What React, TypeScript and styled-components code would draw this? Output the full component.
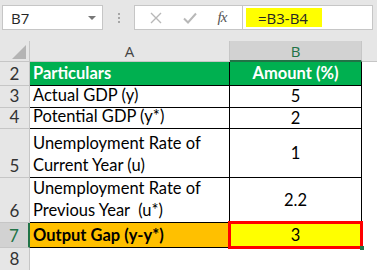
import React from 'react';
import styled, { createGlobalStyle, css } from 'styled-components';

const GlobalStyle = createGlobalStyle`
  html, body {
    margin: 0;
    padding: 0;
    background: #ffffff;
  }
  body {
    width: 377px;
    height: 270px;
    overflow: hidden;
    font-family: Lato, "Liberation Sans", sans-serif;
  }
`;

const colors = {
  chrome: '#e6e6e6',
  chromeBorder: '#c6c6c6',
  headActive: '#d2d2d2',
  excelGreen: '#217346',
  tableGreen: '#00b050',
  orange: '#ffc000',
  yellow: '#ffff00',
  red: '#ff0000',
  grid: '#000000',
};

const TopBar = styled.div`
  display: flex;
  align-items: flex-start;
  height: 41px;
  padding: 5px 0 0 2px;
  box-sizing: border-box;
  background: ${colors.chrome};
`;

const NameBox = styled.div`
  display: flex;
  align-items: center;
  justify-content: space-between;
  width: 101px;
  height: 25px;
  box-sizing: border-box;
  padding: 0 6px 0 8px;
  background: #fff;
  border: 1px solid ${colors.chromeBorder};
  font-family: "Open Sans", "Liberation Sans", sans-serif;
  font-size: 15px;
  color: #262626;
`;

const Caret = styled.span`
  width: 0;
  height: 0;
  border-left: 4px solid transparent;
  border-right: 4px solid transparent;
  border-top: 4px solid #777;
`;

const Dots = styled.div`
  display: flex;
  flex-direction: column;
  gap: 2px;
  width: 31px;
  align-items: center;
  padding-top: 8px;

  span {
    width: 2px;
    height: 2px;
    background: #a6a6a6;
  }
`;

const FxButtons = styled.div`
  display: flex;
  align-items: center;
  justify-content: space-around;
  width: 109px;
  height: 25px;
  box-sizing: border-box;
  padding: 0 6px 0 4px;
  background: #fff;
  border: 1px solid ${colors.chromeBorder};
`;

const FxLabel = styled.span`
  font-family: "Liberation Serif", serif;
  font-style: italic;
  font-size: 15px;
  color: #555;
  letter-spacing: -1px;
`;

const FormulaInput = styled.div`
  display: flex;
  align-items: center;
  width: 130px;
  height: 25px;
  box-sizing: border-box;
  padding: 2px 3px;
  background: #fff;
  border: 1px solid ${colors.chromeBorder};
  border-left: none;
`;

const Highlight = styled.div`
  display: flex;
  align-items: center;
  height: 100%;
  width: 76px;
  padding-left: 12px;
  box-sizing: border-box;
  background: ${colors.yellow};
  font-family: "Open Sans", "Liberation Sans", sans-serif;
  font-size: 15px;
  color: #262626;
`;

const Sheet = styled.div`
  display: grid;
  grid-template-columns: 30px 200px 132px 1fr;
  grid-template-rows: 21px 24px 22px 21px 49px 45px 25px 23px;
`;

const Corner = styled.div`
  position: relative;
  background: ${colors.chrome};
  border-right: 1px solid ${colors.chromeBorder};
  border-bottom: 1px solid ${colors.chromeBorder};
  box-sizing: border-box;

  &::after {
    content: '';
    position: absolute;
    right: 3px;
    bottom: 2px;
    width: 0;
    height: 0;
    border-left: 14px solid transparent;
    border-bottom: 14px solid #b4b4b4;
  }
`;

const ColHead = styled.div<{ $active?: boolean }>`
  display: flex;
  align-items: center;
  justify-content: center;
  box-sizing: border-box;
  font-family: "Open Sans", "Liberation Sans", sans-serif;
  font-size: 15px;
  background: ${colors.chrome};
  color: #444;
  border-right: 1px solid ${colors.chromeBorder};
  border-bottom: 1px solid ${colors.chromeBorder};

  ${(p) =>
    p.$active &&
    css`
      background: ${colors.headActive};
      color: ${colors.excelGreen};
      border-bottom: 2px solid ${colors.excelGreen};
    `}
`;

const ColFiller = styled.div`
  background: ${colors.chrome};
  border-bottom: 1px solid ${colors.chromeBorder};
`;

const RowHead = styled.div<{ $active?: boolean }>`
  display: flex;
  align-items: flex-end;
  justify-content: center;
  padding-bottom: 1px;
  box-sizing: border-box;
  font-family: Lato, "Liberation Sans", sans-serif;
  font-size: 17px;
  color: #333;
  background: ${colors.chrome};
  border-bottom: 1px solid ${colors.chromeBorder};
  border-right: 1px solid ${colors.chromeBorder};

  ${(p) =>
    p.$active &&
    css`
      background: ${colors.headActive};
      color: ${colors.excelGreen};
      border-right: 2px solid ${colors.excelGreen};
    `}
`;

type Tone = 'plain' | 'head' | 'total' | 'result';

const toneStyles: Record<Tone, ReturnType<typeof css>> = {
  plain: css``,
  head: css`
    background: ${colors.tableGreen};
    color: #fff;
    font-weight: 700;
  `,
  total: css`
    background: ${colors.orange};
    font-weight: 700;
  `,
  result: css`
    background: ${colors.yellow};
  `,
};

const Cell = styled.div<{ $tone: Tone; $center?: boolean }>`
  position: relative;
  display: flex;
  flex-direction: column;
  justify-content: ${(p) => (p.$center ? 'center' : 'flex-end')};
  align-items: ${(p) => (p.$center ? 'center' : 'flex-start')};
  padding: 0 3px 1px;
  box-sizing: border-box;
  font-family: Lato, "Liberation Sans", sans-serif;
  font-size: 16.5px;
  line-height: 22px;
  color: #000;
  white-space: nowrap;
  border-right: 1px solid ${colors.grid};
  border-bottom: 1px solid ${colors.grid};
  ${(p) => toneStyles[p.$tone]}
`;

const Selection = styled.div`
  position: absolute;
  left: -2px;
  top: -2px;
  right: -2px;
  bottom: -2px;
  border: 3px solid ${colors.red};
  pointer-events: none;

  &::after {
    content: '';
    position: absolute;
    right: -4px;
    bottom: -4px;
    width: 4px;
    height: 4px;
    background: ${colors.excelGreen};
  }
`;

const Blank = styled.div`
  background: #fff;
`;

interface Row {
  n: number;
  label: React.ReactNode;
  value: string;
  tone?: Tone;
}

const rows: Row[] = [
  { n: 2, label: 'Particulars', value: 'Amount (%)', tone: 'head' },
  { n: 3, label: 'Actual GDP (y)', value: '5' },
  { n: 4, label: 'Potential GDP (y*)', value: '2' },
  { n: 5, label: <>Unemployment Rate of<br />Current Year (u)</>, value: '1' },
  { n: 6, label: <>Unemployment Rate of<br />Previous Year&nbsp;&nbsp;(u*)</>, value: '2.2' },
  { n: 7, label: 'Output Gap (y-y*)', value: '3', tone: 'total' },
];

const App = () => (
  <>
    <GlobalStyle />
    <TopBar>
      <NameBox>
        B7
        <Caret />
      </NameBox>
      <Dots>
        <span />
        <span />
        <span />
      </Dots>
      <FxButtons>
        <svg width="14" height="14" viewBox="0 0 14 14">
          <path d="M2 2 L12 12 M12 2 L2 12" stroke="#b8b8b8" strokeWidth="1.4" fill="none" />
        </svg>
        <svg width="16" height="14" viewBox="0 0 16 14">
          <path d="M2 7.5 L6 11.5 L14 2.5" stroke="#b8b8b8" strokeWidth="2" fill="none" />
        </svg>
        <FxLabel>fx</FxLabel>
      </FxButtons>
      <FormulaInput>
        <Highlight>=B3-B4</Highlight>
      </FormulaInput>
    </TopBar>
    <Sheet>
      <Corner />
      <ColHead>A</ColHead>
      <ColHead $active>B</ColHead>
      <ColFiller />
      {rows.map((r) => (
        <React.Fragment key={r.n}>
          <RowHead $active={r.n === 7}>{r.n}</RowHead>
          <Cell $tone={r.tone ?? 'plain'}>{r.label}</Cell>
          <Cell $tone={r.n === 7 ? 'result' : r.tone ?? 'plain'} $center>
            {r.value}
            {r.n === 7 && <Selection />}
          </Cell>
          <Blank />
        </React.Fragment>
      ))}
      <RowHead>8</RowHead>
      <Blank />
      <Blank />
      <Blank />
    </Sheet>
  </>
);

export default App;
